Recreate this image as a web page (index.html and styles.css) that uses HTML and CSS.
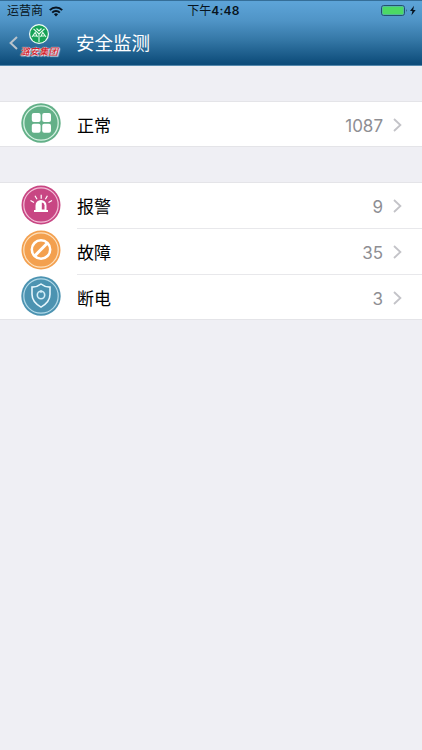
FILE: index.html
```html
<!DOCTYPE html>
<html lang="zh-CN">
<head>
  <meta charset="UTF-8">
  <meta name="viewport" content="width=device-width, initial-scale=1.0">
  <title>安全监测</title>
  <link rel="stylesheet" href="styles.css">
</head>
<body>

<header>
  <div class="status-bar">
    <div class="carrier">
      <span>运营商</span>
      <svg class="wifi" width="14" height="11" viewBox="0 0 14 11" fill="none" stroke="#081420" stroke-width="2">
        <path d="M.8 4.1a8.8 8.8 0 0 1 12.4 0M3.2 6.6a5.4 5.4 0 0 1 7.6 0"/>
        <path d="M7 10.5L4.9 8.3a3 3 0 0 1 4.2 0z" fill="#081420" stroke="none"/>
      </svg>
    </div>
    <div class="time">下午<b>4:48</b></div>
    <div class="battery">
      <svg width="36" height="12" viewBox="0 0 36 12">
        <rect x=".5" y=".5" width="23" height="10" rx="2.2" fill="none" stroke="#25516f"/>
        <rect x="1.5" y="1.5" width="21" height="8" rx="1" fill="#4cd964"/>
        <path d="M25 4q1.5 1.5 0 3z" fill="#25516f"/>
        <path d="M33 .8l-4 5.2h2.4l-1 4.6 4.3-5.6h-2.5z" fill="#081420"/>
      </svg>
    </div>
  </div>
  <div class="nav-bar">
    <svg class="back" width="10" height="14" viewBox="0 0 10 14" fill="none" stroke="#b9c3cb" stroke-width="2">
      <path d="M9 1L2.6 7 9 13"/>
    </svg>
    <div class="logo">
      <svg width="22" height="20" viewBox="0 0 22 20">
        <circle cx="11" cy="10" r="10" fill="#f3fff7"/>
        <circle cx="11" cy="10" r="8.8" fill="#16a257"/>
        <path d="M11 9.5V18M5.5 4.8L11 10l5.5-5.2M8.500 4.500L11 7l2.500-2.500M4 13l3.200-4.500L9.500 13M12.500 13l2.300-4.500L18 13M5.500 12h3M13.500 12h3" fill="none" stroke="#e6fbee" stroke-width="1.1"/>
      </svg>
      <span>潞安集团</span>
    </div>
    <h1>安全监测</h1>
  </div>
</header>

<section class="list">
  <div class="row">
    <svg class="icon" viewBox="0 0 40 40">
      <circle cx="20" cy="20" r="19.7" fill="#63b088"/>
      <circle cx="20" cy="20" r="17.2" fill="none" stroke="#d5f2e2" stroke-width="1.3"/>
      <g fill="#fff">
        <rect x="10.8" y="10" width="8.8" height="9" rx="2"/>
        <rect x="21.2" y="10" width="8.8" height="9" rx="2"/>
        <rect x="10.8" y="20.8" width="8.8" height="9" rx="2"/>
        <rect x="21.2" y="20.8" width="8.8" height="9" rx="2"/>
      </g>
    </svg>
    <div class="cell">
      <span class="name">正常</span>
      <span class="count">1087</span>
      <svg class="arrow" viewBox="0 0 9 14"><path d="M1 1l6.4 6L1 13"/></svg>
    </div>
  </div>
</section>

<section class="list">
  <div class="row">
    <svg class="icon" viewBox="0 0 40 40">
      <circle cx="20" cy="20" r="19.5" fill="#c84683"/>
      <circle cx="20" cy="20" r="17.2" fill="none" stroke="#f3bed7" stroke-width="1.2"/>
      <path d="M14.500 25v-4.500a5.500 5.500 0 0 1 11 0V25H27v2H13v-2z" fill="#fff"/>
      <path d="M20.800 17.500v7h2.700v-4.300a3 3 0 0 0-2.700-2.700z" fill="#c84683"/>
      <path d="M20.2 9.700v4M14 10.800l2 3.500M26.400 10.800l-2 3.500M9.500 15.500l3.500 2M31 15.500l-3.500 2" stroke="#fff" stroke-width="1.2"/>
    </svg>
    <div class="cell">
      <span class="name">报警</span>
      <span class="count">9</span>
      <svg class="arrow" viewBox="0 0 9 14"><path d="M1 1l6.4 6L1 13"/></svg>
    </div>
  </div>
  <div class="row">
    <svg class="icon" viewBox="0 0 40 40">
      <circle cx="20" cy="20" r="19.5" fill="#f3a04f"/>
      <circle cx="20" cy="20" r="17.2" fill="none" stroke="#fde0bd" stroke-width="1.2"/>
      <circle cx="20" cy="19.500" r="9.2" fill="none" stroke="#fff" stroke-width="2.5"/>
      <path d="M13.800 25.700l12.400-12.400" stroke="#fff" stroke-width="3"/>
    </svg>
    <div class="cell">
      <span class="name">故障</span>
      <span class="count">35</span>
      <svg class="arrow" viewBox="0 0 9 14"><path d="M1 1l6.4 6L1 13"/></svg>
    </div>
  </div>
  <div class="row">
    <svg class="icon" viewBox="0 0 40 40">
      <circle cx="20" cy="20" r="19.7" fill="#4c93b1"/>
      <circle cx="20" cy="20" r="17.2" fill="none" stroke="#b3dae9" stroke-width="1.2"/>
      <path d="M20 8c2.500 2 5.500 3 9 3.100v7.200c0 6-3.600 9.800-9 12.800-5.400-3-9-6.800-9-12.800v-7.200c3.500-.1 6.500-1.100 9-3.100z" fill="none" stroke="#e6f6fc" stroke-width="1.6"/>
      <circle cx="20" cy="19" r="3.7" fill="none" stroke="#d2edf7" stroke-width="1.6"/>
      <path d="M20 14v3" stroke="#d2edf7" stroke-width="1.2"/>
    </svg>
    <div class="cell">
      <span class="name">断电</span>
      <span class="count">3</span>
      <svg class="arrow" viewBox="0 0 9 14"><path d="M1 1l6.4 6L1 13"/></svg>
    </div>
  </div>
</section>

</body>
</html>
```
FILE: styles.css
```css
* {
  box-sizing: border-box;
}
body {
  margin: 0;
  min-height: 750px;
  background: #efeff4;
  font-family: Inter, "Noto Sans CJK SC", sans-serif;
  color: #000;
}
svg {
  display: block;
  flex: none;
}
header {
  height: 66px;
  background: linear-gradient(#5ca3d7 2px, #4f94c6 20px, #3679a8 38px, #0e4d7b 62px, #0e4d7b);
  border-top: 1px solid #356e98;
  border-bottom: 1px solid #5589ad;
}
.status-bar {
  display: grid;
  grid-template-columns: 1fr auto 1fr;
  align-items: center;
  height: 20px;
  padding: 0 5px 0 7px;
  font-size: 12px;
  line-height: 18px;
  color: #081420;
}
.carrier {
  display: flex;
  align-items: center;
  gap: 6px;
}
.time {
  padding-left: 3px;
}
.time b {
  font-weight: 600;
  letter-spacing: .2px;
}
.battery {
  justify-self: end;
}
.nav-bar {
  display: flex;
  align-items: center;
  height: 44px;
  padding-left: 8px;
}
.logo {
  width: 40px;
  height: 38px;
  margin-left: 1px;
}
.logo svg {
  margin: 0 auto;
}
.logo span {
  display: block;
  font-size: 9.5px;
  line-height: 15px;
  font-weight: 500;
  font-style: italic;
  text-align: center;
  white-space: nowrap;
  color: #d3202b;
  text-shadow: 0 0 1px #fff, 0 0 1px #fff, 1px 1px 1px #fff;
}
h1 {
  margin: 0 0 0 17px;
  font-size: 18.5px;
  line-height: 26px;
  font-weight: 400;
  color: #fff;
}
.list {
  margin-top: 35px;
  background: #fff;
  border-top: 1px solid #e4e4e8;
  border-bottom: 1px solid #e4e4e8;
}
.row {
  display: flex;
  align-items: center;
  height: 45px;
  padding-left: 21px;
}
.row:only-child {
  height: 44px;
}
.row:nth-child(2) {
  height: 46px;
}
.icon {
  width: 40px;
  height: 40px;
  margin-bottom: 2px;
}
.cell {
  display: flex;
  align-items: center;
  flex: 1;
  height: 100%;
  margin-left: 16px;
  padding: 2px 20px 0 0;
}
.row:last-child .cell {
  padding-top: 4px;
}
.row + .row .cell {
  border-top: 1px solid #e8e8eb;
}
.name {
  flex: 1;
  font-size: 17px;
  line-height: 24px;
}
.count {
  font-size: 17px;
  line-height: 24px;
  color: #8e8e93;
}
.arrow {
  width: 9px;
  height: 14px;
  margin: -2px 0 0 10px;
  fill: none;
  stroke: #c3c3c8;
  stroke-width: 1.8;
}
```
